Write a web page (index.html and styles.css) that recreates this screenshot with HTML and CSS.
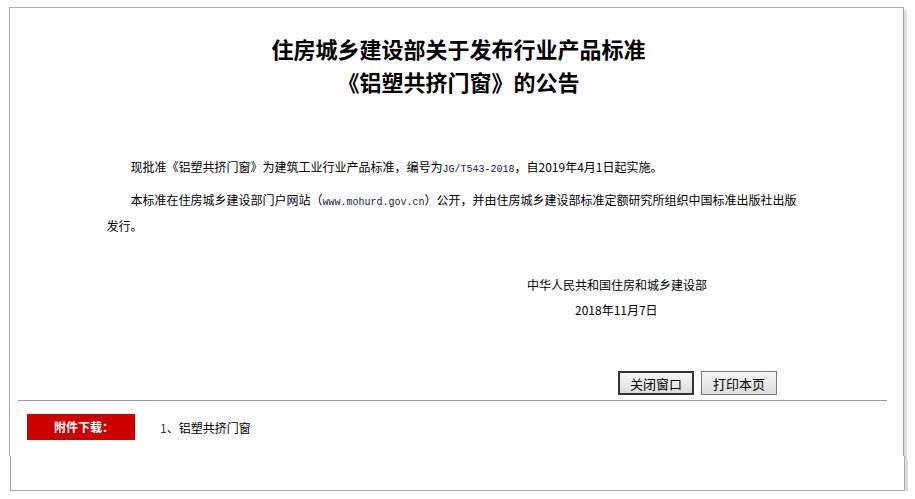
FILE: index.html
```html
<!DOCTYPE html>
<html lang="zh-CN">
<head>
    <meta charset="UTF-8">
    <title>住房城乡建设部关于发布行业产品标准《铝塑共挤门窗》的公告</title>
    <link rel="stylesheet" href="styles.css">
</head>
<body>
    <div class="page">
        <h1 class="title">住房城乡建设部关于发布行业产品标准<br>《铝塑共挤门窗》的公告</h1>

        <div class="content">
            <p>现批准《铝塑共挤门窗》为建筑工业行业产品标准，编号为<span class="mono">JG/T543-2018</span>，自2019年4月1日起实施。</p>
            <p>本标准在住房城乡建设部门户网站（<span class="mono">www.mohurd.gov.cn</span>）公开，并由住房城乡建设部标准定额研究所组织中国标准出版社出版发行。</p>
        </div>

        <div class="sign">
            <div class="sign-org">中华人民共和国住房和城乡建设部</div>
            <div class="sign-date">2018年11月7日</div>
        </div>

        <div class="actions">
            <button type="button" class="btn btn-focus" onclick="window.close()">关闭窗口</button>
            <button type="button" class="btn" onclick="window.print()">打印本页</button>
        </div>

        <div class="attach">
            <div class="attach-label">附件下载：</div>
            <div class="attach-list"><span class="num">1</span>、铝塑共挤门窗</div>
        </div>
    </div>
    <div class="page-foot"></div>
</body>
</html>
```

FILE: styles.css
```css
/* 公告页面样式 */
body {
    margin: 0;
    padding-top: 7px;
    background-color: #fff;
    font-family: "Noto Sans CJK SC", "Liberation Sans", sans-serif;
    font-size: 12px;
    color: #000;
}
.page {
    width: 893px;
    height: 424px;
    margin-left: 9px;
    border: 1px solid #aaa;
    border-bottom: none;
    background-color: #fff;
    box-shadow: 3px 3px 0 #ddd;
    padding-top: 24px;
}
.page-foot {
    position: relative;
    width: 893px;
    height: 34px;
    margin-left: 10px;
    border: 1px solid #aaa;
    border-top: none;
    background-color: #fff;
    box-shadow: 3px 3px 0 #ddd;
}
.title {
    margin: 0;
    text-align: center;
    font-size: 22px;
    line-height: 33px;
    font-weight: bold;
    padding-left: 4px;
}
.content {
    width: 700px;
    margin: 56px auto 0;
}
.content p {
    margin: 0 0 7px;
    line-height: 26px;
    text-indent: 24px;
}
.mono {
    font-family: "Liberation Mono", monospace;
    font-size: 10px;
    line-height: 1;
    color: #224;
}
.sign {
    margin-top: 33px;
    line-height: 25px;
}
.sign-org {
    padding-left: 517px;
}
.sign-date {
    padding-left: 565px;
}
.actions {
    display: flex;
    justify-content: flex-end;
    gap: 7px;
    margin-top: 49px;
    padding-right: 126px;
}
.btn {
    width: 76px;
    height: 24px;
    padding: 0;
    font-family: "Noto Sans CJK SC", sans-serif;
    font-size: 13px;
    line-height: 1;
    color: #000;
    background: linear-gradient(#f6f6f6, #dedede);
    border: 1px solid #777;
    cursor: pointer;
}
.btn-focus {
    border: 2px solid #333;
}
.attach {
    display: flex;
    align-items: center;
    margin: 5px 16px 0 8px;
    padding: 13px 0 0 9px;
    border-top: 1px solid #999;
}
.attach-label {
    width: 102px;
    height: 26px;
    line-height: 26px;
    padding-left: 6px;
    text-align: center;
    background-color: #cc0000;
    color: #fff;
    font-weight: bold;
}
.attach-list {
    margin-left: 25px;
}
.attach-list .num {
    color: #33336a;
}
```
